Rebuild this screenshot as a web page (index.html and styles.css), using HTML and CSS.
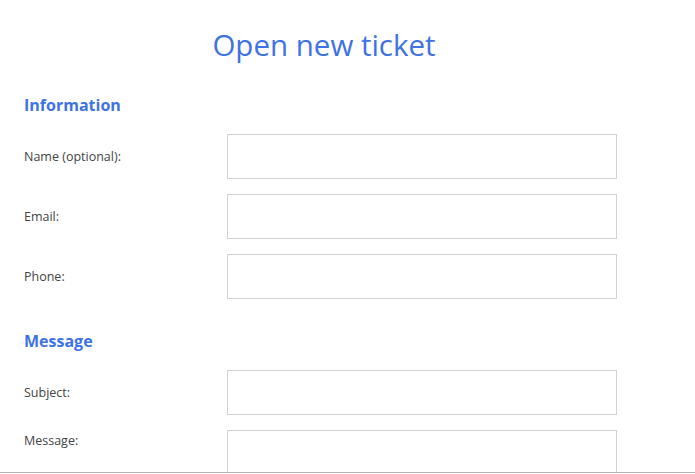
FILE: index.html
```html
<!DOCTYPE html>
<html lang="en">
<head>
<meta charset="utf-8">
<title>Open new ticket</title>
<link rel="stylesheet" href="styles.css">
</head>
<body>
<div class="frame">
  <form class="ticket">
    <h1 class="title">Open new ticket</h1>
    <h2 class="section">Information</h2>
    <div class="rows">
      <div class="row"><label class="label">Name (optional):</label><input class="field" type="text"></div>
      <div class="row"><label class="label">Email:</label><input class="field" type="text"></div>
      <div class="row"><label class="label">Phone:</label><input class="field" type="text"></div>
    </div>
    <h2 class="section section-msg">Message</h2>
    <div class="rows">
      <div class="row"><label class="label">Subject:</label><input class="field" type="text"></div>
      <div class="row row-top"><label class="label">Message:</label><textarea class="field area"></textarea></div>
    </div>
  </form>
</div>
</body>
</html>
```
FILE: styles.css
```css
* { box-sizing: border-box; }
html, body { margin: 0; padding: 0; background: #fff; }
body { font-family: "Open Sans", "Noto Sans", sans-serif; }
.frame {
  height: 473px;
  overflow: hidden;
  border-bottom: 1px solid #b4b4b4;
}
.ticket {
  width: 624px;
  padding-left: 24px;
}
.title {
  margin: 25px 0 0;
  font-size: 29.5px;
  line-height: 40px;
  font-weight: 400;
  color: #3f72e2;
  text-align: center;
}
.section {
  margin: 28px 0 0;
  font-size: 16px;
  line-height: 24px;
  font-weight: 700;
  color: #3f72e2;
}
.section-msg { margin-top: 30px; }
.rows {
  margin-top: 17px;
  display: flex;
  flex-direction: column;
  gap: 15px;
}
.row {
  display: flex;
  align-items: center;
}
.row-top { align-items: flex-start; }
.row-top .label { padding-top: 2px; }
.label {
  width: 203px;
  flex: none;
  font-size: 12.5px;
  color: #444;
}
.field {
  width: 390px;
  height: 45px;
  border: 1px solid #d2d2d2;
  background: #fff;
  margin: 0;
  padding: 6px 10px;
  font: inherit;
  outline: none;
}
.area { height: 100px; resize: none; }
```
